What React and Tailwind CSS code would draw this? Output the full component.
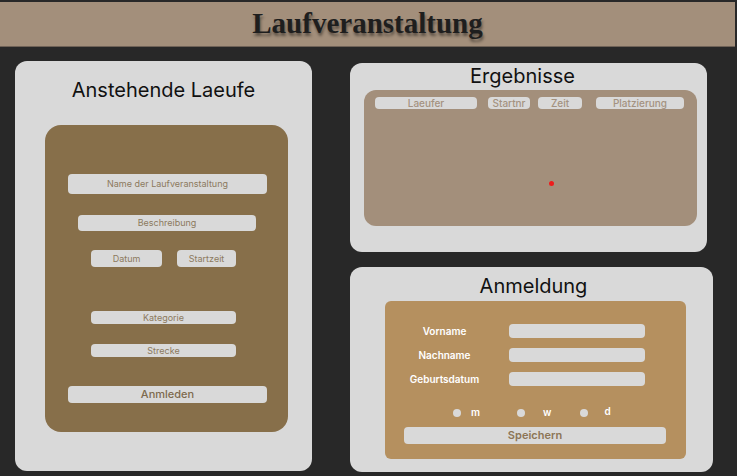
export default function App() {
  const sans = { fontFamily: "Inter, 'Noto Sans', sans-serif" };
  return (
    <div className="w-[737px] h-[476px] bg-[#282828] overflow-hidden pt-[2px]" style={sans}>
      <div className="w-[735px] h-[45px] bg-[#a38f7b] border-b border-[#6f6257] flex items-center justify-center">
        <h1
          className="text-[29px] font-bold text-[#1e1e1e] leading-none [text-shadow:1px_3px_3px_rgba(0,0,0,0.45)] mt-[-1px]"
          style={{ fontFamily: "'Liberation Serif', serif" }}
        >
          Laufveranstaltung
        </h1>
      </div>
      <div className="flex items-start mt-[14px]">
        {/* Left card */}
        <div className="ml-[15px] w-[297px] h-[410px] bg-[#d9d9d9] rounded-[12px] flex flex-col">
          <div className="mt-[16px] text-center text-[20px] leading-[26px] text-[#111]">Anstehende Laeufe</div>
          <div className="ml-[30px] mt-[22px] w-[243px] h-[307px] bg-[#876f4a] rounded-[16px] flex flex-col items-start">
            <div className="ml-[23px] mt-[49px] w-[199px] h-[20px] bg-[#d9d9d9] rounded-[4px] flex items-center justify-center text-[9px] text-[#8c7a5e]">Name der Laufveranstaltung</div>
            <div className="ml-[33px] mt-[21px] w-[178px] h-[16px] bg-[#d9d9d9] rounded-[4px] flex items-center justify-center text-[9px] text-[#8c7a5e]">Beschreibung</div>
            <div className="flex mt-[19px] ml-[46px] gap-[15px]">
              <div className="w-[71px] h-[17px] bg-[#d9d9d9] rounded-[4px] flex items-center justify-center text-[9px] text-[#8c7a5e]">Datum</div>
              <div className="w-[59px] h-[17px] bg-[#d9d9d9] rounded-[4px] flex items-center justify-center text-[9px] text-[#8c7a5e]">Startzeit</div>
            </div>
            <div className="ml-[46px] mt-[44px] w-[145px] h-[13px] bg-[#d9d9d9] rounded-[4px] flex items-center justify-center text-[9px] text-[#8c7a5e]">Kategorie</div>
            <div className="ml-[46px] mt-[20px] w-[145px] h-[13px] bg-[#d9d9d9] rounded-[4px] flex items-center justify-center text-[9px] text-[#8c7a5e]">Strecke</div>
            <div className="ml-[23px] mt-[29px] w-[199px] h-[17px] bg-[#d9d9d9] rounded-[4px] flex items-center justify-center text-[11px] font-medium text-[#7d6a4e]">Anmleden</div>
          </div>
        </div>

        {/* Right column */}
        <div className="ml-[38px] flex flex-col">
          <div className="mt-[2px] w-[357px] h-[189px] bg-[#d9d9d9] rounded-[12px] flex flex-col">
            <div className="pt-[1px] text-center text-[20px] leading-[24px] text-[#111] ml-[-12px]">Ergebnisse</div>
            <div className="ml-[14px] mt-[2px] w-[333px] h-[136px] bg-[#a38f7b] rounded-[12px] relative">
              <div className="flex items-center mt-[7px] ml-[11px]">
                <div className="w-[102px] h-[12px] bg-[#d9d9d9] rounded-[4px] flex items-center justify-center text-[10px] font-medium text-[#a49280]">Laeufer</div>
                <div className="ml-[11px] w-[42px] h-[12px] bg-[#d9d9d9] rounded-[4px] flex items-center justify-center text-[10px] font-medium text-[#a49280]">Startnr</div>
                <div className="ml-[8px] w-[44px] h-[12px] bg-[#d9d9d9] rounded-[4px] flex items-center justify-center text-[10px] font-medium text-[#a49280]">Zeit</div>
                <div className="ml-[14px] w-[88px] h-[12px] bg-[#d9d9d9] rounded-[4px] flex items-center justify-center text-[10px] font-medium text-[#a49280]">Platzierung</div>
              </div>
              <div className="absolute left-[185px] top-[91px] w-[5px] h-[5px] rounded-full bg-[#ee1c1c]" />
            </div>
          </div>

          <div className="mt-[15px] w-[363px] h-[205px] bg-[#d9d9d9] rounded-[12px] flex flex-col">
            <div className="pt-[7px] text-center text-[20px] leading-[24px] text-[#111] ml-[4px]">Anmeldung</div>
            <div className="ml-[35px] mt-[3px] w-[301px] h-[158px] bg-[#b5905f] rounded-[6px] flex flex-col">
              <div className="flex flex-col gap-[10px] mt-[23px]">
                {["Vorname", "Nachname", "Geburtsdatum"].map((l) => (
                  <div key={l} className="flex items-center h-[14px]">
                    <div className="w-[119px] text-center text-[10px] font-semibold text-white">{l}</div>
                    <div className="ml-[5px] w-[136px] h-[14px] bg-[#d9d9d9] rounded-[4px]" />
                  </div>
                ))}
              </div>
              <div className="flex items-center mt-[20px] h-[12px] text-[10px] font-semibold text-white">
                <div className="ml-[68px] w-[8px] h-[8px] rounded-full bg-[#d9d9d9] mt-[2px]" />
                <div className="ml-[10px]">m</div>
                <div className="ml-[37px] w-[8px] h-[8px] rounded-full bg-[#d9d9d9] mt-[2px]" />
                <div className="ml-[18px]">w</div>
                <div className="ml-[29px] w-[8px] h-[8px] rounded-full bg-[#d9d9d9] mt-[2px]" />
                <div className="ml-[16px] mt-[-2px]">d</div>
              </div>
              <div className="ml-[19px] mt-[9px] w-[262px] h-[17px] bg-[#d9d9d9] rounded-[4px] flex items-center justify-center text-[11px] font-semibold text-[#8c7556]">Speichern</div>
            </div>
          </div>
        </div>
      </div>
    </div>
  );
}
